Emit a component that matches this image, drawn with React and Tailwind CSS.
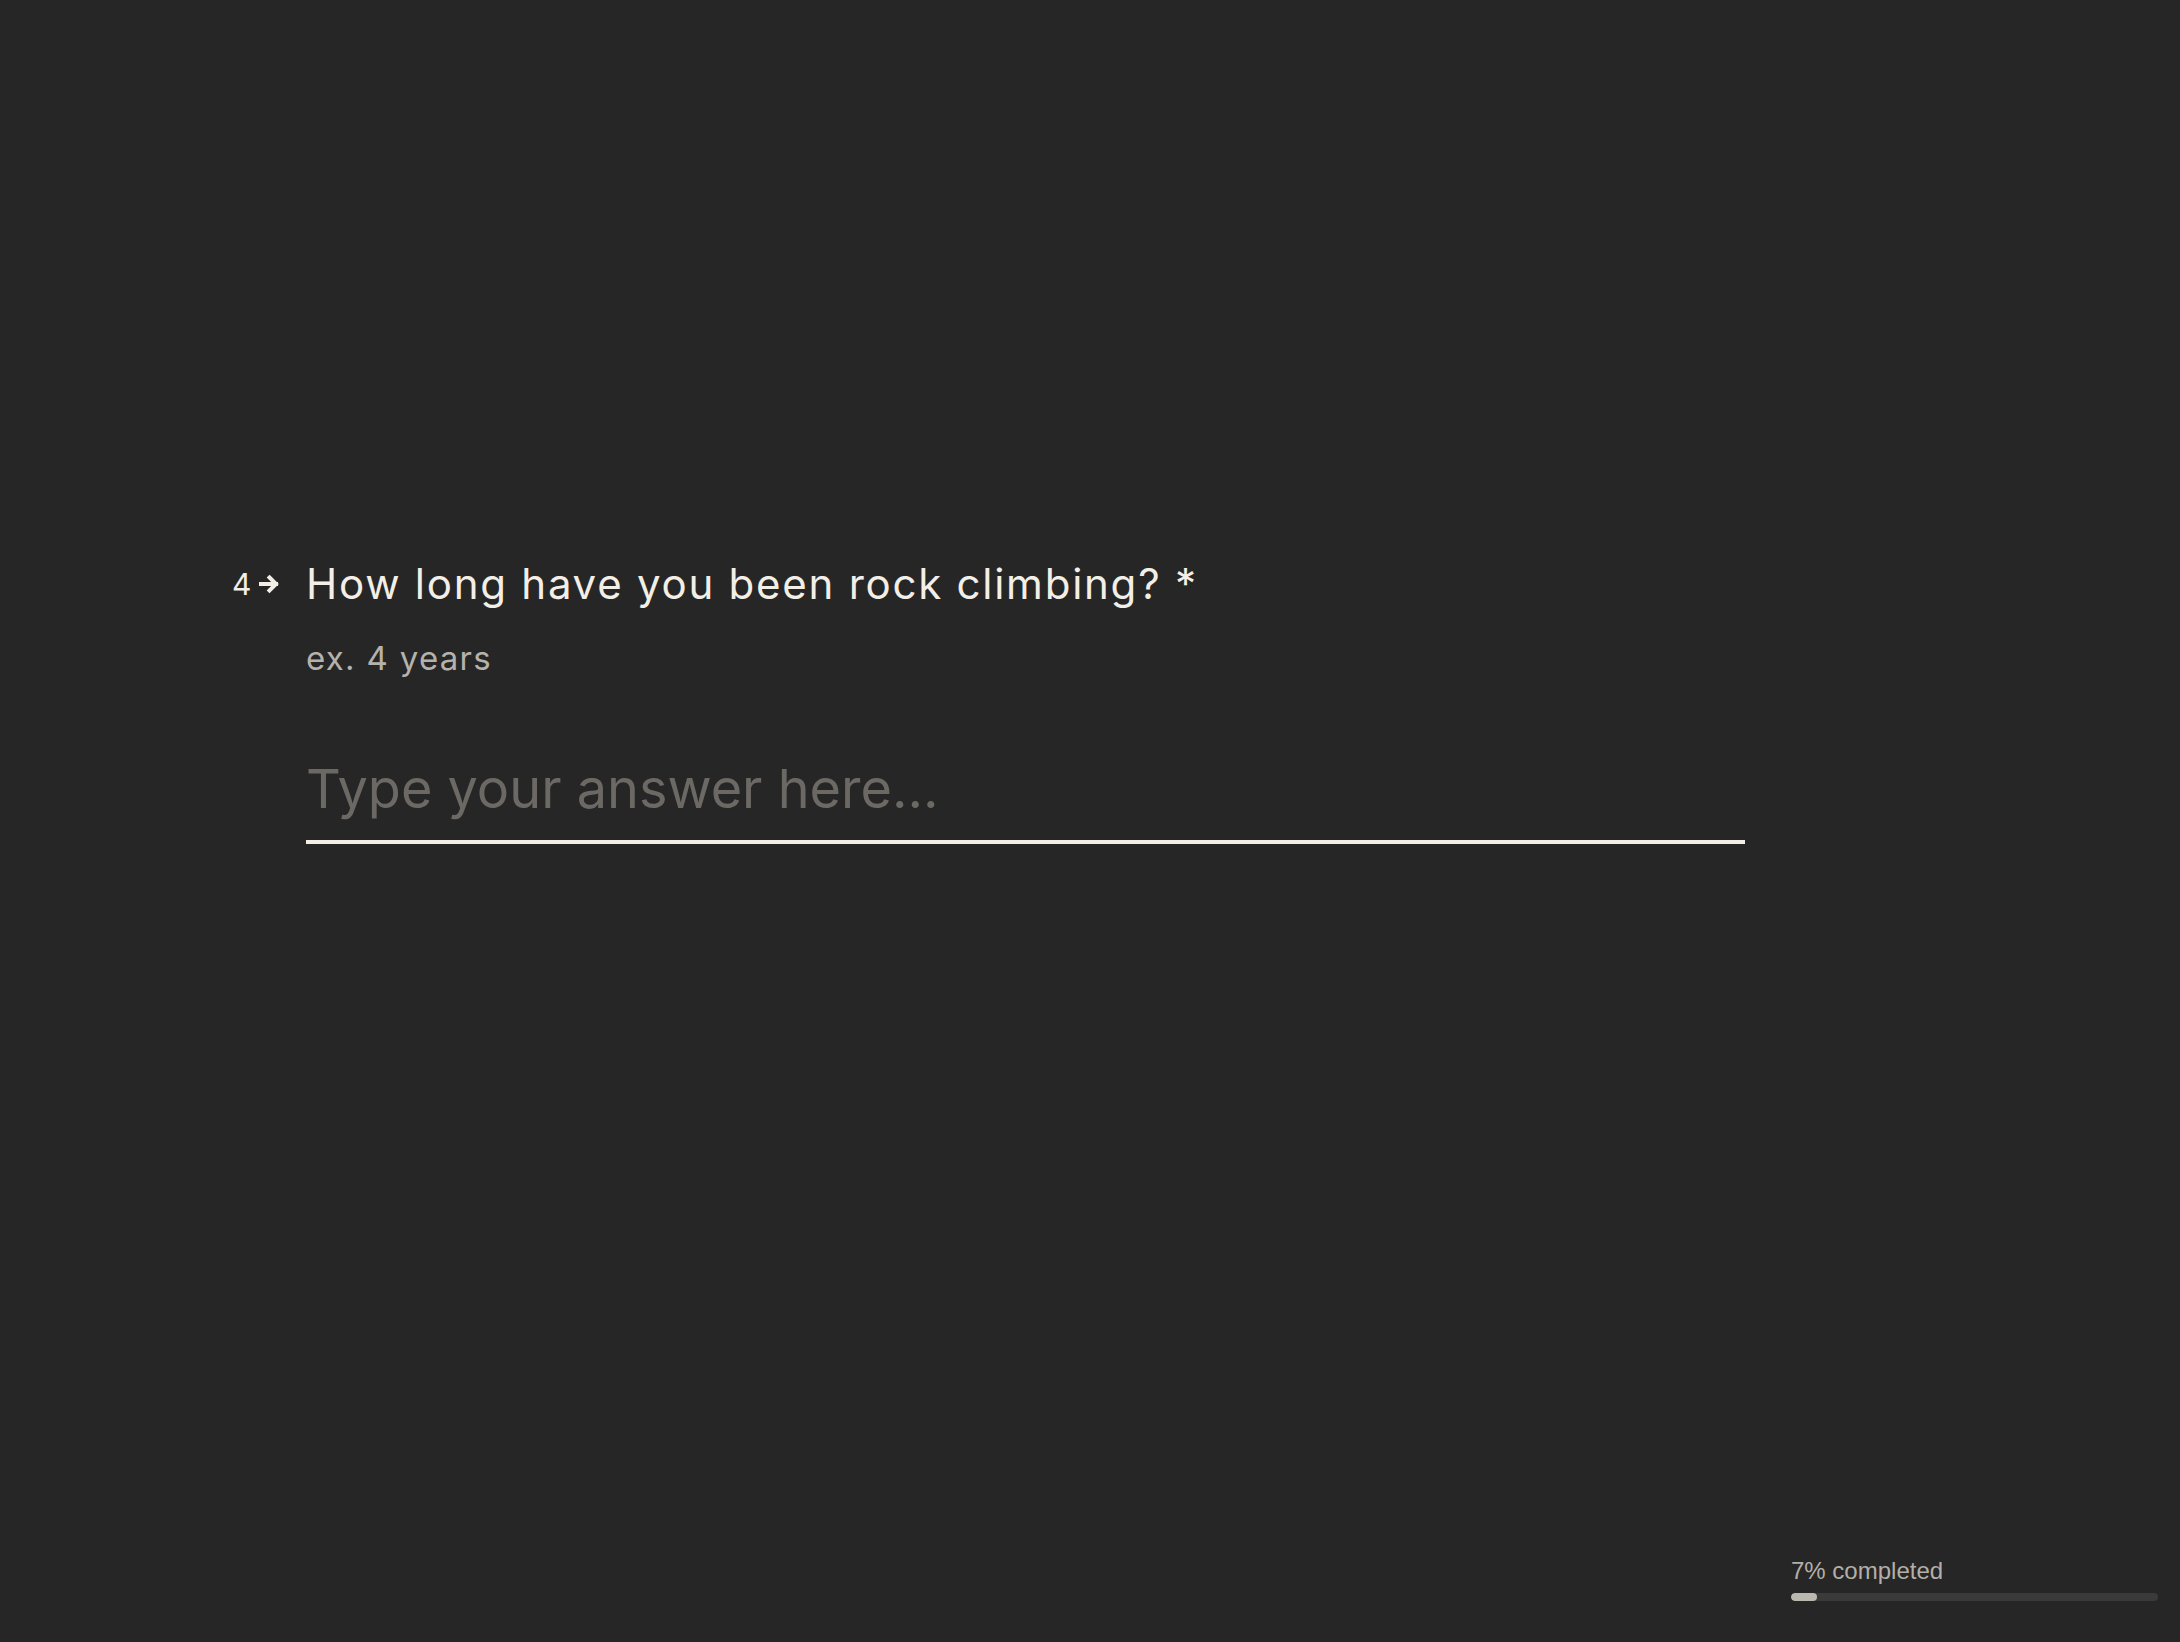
import React, { useState } from "react";

const ArrowRight = () => (
  <svg width="21" height="20" viewBox="0 0 21 20" fill="none">
    <path d="M1 10h16M10.5 3.5l6.5 6.5-6.5 6.5" stroke="#f3efe6" strokeWidth="4" strokeLinecap="square" />
  </svg>
);

const Progress = ({ percent }) => (
  <div className="w-[367px] flex flex-col gap-[9px] font-['Liberation_Sans',Arial,sans-serif]">
    <p className="text-[24px] leading-[26px] text-[#b3afa8]">{percent}% completed</p>
    <div className="h-[8px] w-full rounded-full bg-[#3a3a3a] overflow-hidden">
      <div className="h-full rounded-full bg-[#bbb8b0]" style={{ width: `${percent}%` }} />
    </div>
  </div>
);

const App = () => {
  const [answer, setAnswer] = useState("");

  return (
    <div className="w-full h-[1642px] bg-[#262626] flex flex-col font-['Inter','Noto_Sans',sans-serif]">
      <main className="flex-1 pt-[558px] pl-[232px]">
        <div className="flex">
          {/* question number */}
          <div className="w-[74px] pt-[7px] flex items-center gap-[8px] h-[38px] box-content">
            <span className="text-[30px] leading-none text-[#f3efe6]">4</span>
            <ArrowRight />
          </div>

          <div className="flex flex-col">
            <h1 className="text-[42px] leading-[52px] text-[#f3efe6] tracking-[1.75px]">
              How long have you been rock climbing? *
            </h1>
            <p className="mt-[28px] text-[33px] leading-[40px] text-[#b5b2ac] tracking-[1.3px]">ex. 4 years</p>

            <input
              type="text"
              value={answer}
              onChange={(e) => setAnswer(e.target.value)}
              placeholder="Type your answer here..."
              className="mt-[78px] w-[1439px] bg-transparent outline-none border-b-[4px] border-[#f3efe6] pb-[18px] text-[54px] leading-[66px] text-[#f3efe6] placeholder:text-[#6c6965]"
            />
          </div>
        </div>
      </main>

      <footer className="flex justify-end pr-[22px] pb-[41px]">
        <Progress percent={7} />
      </footer>
    </div>
  );
};

export default App;
